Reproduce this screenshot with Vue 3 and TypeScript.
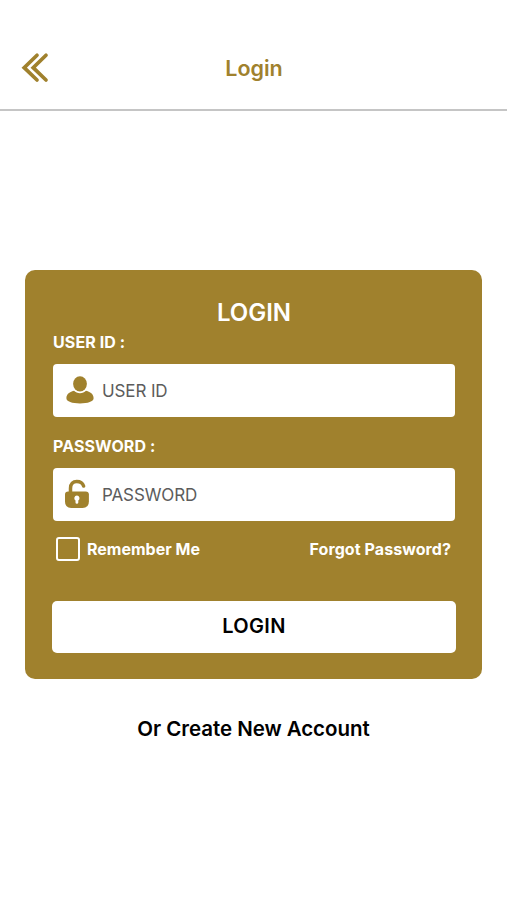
<script setup lang="ts">
import { ref } from 'vue'

const userId = ref('')
const password = ref('')
const remember = ref(false)
</script>

<template>
  <div class="screen">
    <header class="topbar">
      <button class="back" type="button" aria-label="Back">
        <svg width="30" height="32" viewBox="0 0 30 32" fill="none" stroke="currentColor" stroke-width="3.7" stroke-linecap="round" stroke-linejoin="miter">
          <path d="M17 3.2L4.2 15.7L17 28" />
          <path d="M26 3.2L13.2 15.7L26 28" />
        </svg>
      </button>
      <h1 class="title">Login</h1>
    </header>

    <main class="content">
      <form class="card" @submit.prevent>
        <h2 class="heading">LOGIN</h2>

        <label class="label user-label" for="user">USER ID :</label>
        <div class="field">
          <svg class="user-icon" width="28" height="28" viewBox="0 0 28 28" fill="currentColor">
            <ellipse cx="14" cy="7.8" rx="6.9" ry="7.6" />
            <path d="M8 14.8C3 15.9 0.4 18.7 0.4 22.2C0.4 25.4 6.2 27.4 14 27.4S27.6 25.4 27.6 22.2C27.6 18.7 25 15.9 20 14.8C18.4 16.4 16.5 17.3 14 17.3S9.6 16.4 8 14.8Z" />
          </svg>
          <input id="user" v-model="userId" class="input" type="text" placeholder="USER ID" />
        </div>

        <label class="label password-label" for="password">PASSWORD :</label>
        <div class="field">
          <svg class="lock-icon" width="26" height="30" viewBox="0 0 26 30">
            <path d="M6.5 14V9.2C6.5 5 9 2.6 12.8 2.6C16.3 2.6 18.7 4.4 19.6 7" fill="none" stroke="currentColor" stroke-width="3.5" stroke-linecap="round" />
            <path d="M4.2 12.4H21.6Q24.9 12.4 24.9 15.4V22.5Q24.9 29 18.5 29H7.2Q1 29 1 22.5V15.4Q1 12.4 4.2 12.4Z" fill="currentColor" />
            <path d="M12.9 16.6A2.6 2.6 0 0 1 14.3 21.4V23.4A1.4 1.4 0 0 1 11.5 23.4V21.4A2.6 2.6 0 0 1 12.9 16.6Z" fill="#fff" />
          </svg>
          <input id="password" v-model="password" class="input" type="password" placeholder="PASSWORD" />
        </div>

        <div class="options">
          <label class="remember">
            <input v-model="remember" class="checkbox" type="checkbox" />
            <span>Remember Me</span>
          </label>
          <a class="forgot">Forgot Password?</a>
        </div>

        <button class="submit" type="submit">LOGIN</button>
      </form>

      <a class="create">Or Create New Account</a>
    </main>
  </div>
</template>

<style>
body {
  margin: 0;
  background: #fff;
}
</style>

<style scoped>
.screen {
  --gold: #a0812d;
  box-sizing: border-box;
  width: 100%;
  min-height: 900px;
  background: #fff;
  font-family: Inter, "Liberation Sans", sans-serif;
  font-feature-settings: "calt" 0;
}
.topbar {
  box-sizing: border-box;
  height: 111px;
  padding: 26px 20px 0;
  border-bottom: 2px solid #c5c5c5;
  display: grid;
  grid-template-columns: 30px 1fr 30px;
  align-items: center;
  color: var(--gold);
}
.back {
  display: flex;
  padding: 0;
  border: 0;
  background: none;
  color: inherit;
}
.title {
  margin: 0;
  padding-left: 1px;
  font-size: 21.5px;
  line-height: 28px;
  font-weight: 620;
  text-align: center;
}
.content {
  display: flex;
  flex-direction: column;
  align-items: center;
  padding: 159px 25px 0;
}
.card {
  box-sizing: border-box;
  display: flex;
  flex-direction: column;
  width: 457px;
  height: 409px;
  padding: 28px 27px 26px 28px;
  border-radius: 10px;
  background: var(--gold);
  color: #fff;
}
.card > * {
  flex-shrink: 0;
}
.heading {
  margin: 0;
  font-size: 24px;
  line-height: 29px;
  font-weight: 600;
  text-align: center;
}
.label {
  font-size: 16px;
  line-height: 20px;
  font-weight: 700;
  letter-spacing: 0.1px;
}
.user-label {
  margin: 5px 0 12px;
}
.password-label {
  margin: 19px 0 12px;
}
.field {
  box-sizing: border-box;
  display: flex;
  align-items: center;
  height: 53px;
  padding-left: 12px;
  border-radius: 4px;
  background: #fff;
  color: var(--gold);
}
.user-icon {
  margin: 0 8px 1px 1px;
}
.lock-icon {
  margin: 0 12px 1px -1px;
}
.input {
  flex: 1;
  min-width: 0;
  padding: 1px 0 0;
  border: 0;
  outline: 0;
  background: none;
  color: #333;
  font-family: inherit;
  font-size: 17px;
  letter-spacing: -0.12px;
}
.input::placeholder {
  color: #5c5c5c;
  opacity: 1;
}
.options {
  display: flex;
  justify-content: space-between;
  align-items: center;
  height: 24px;
  margin-top: 16px;
  padding: 0 4px 0 3px;
  font-size: 16px;
  font-weight: 700;
}
.forgot {
  letter-spacing: 0.08px;
}
.remember {
  display: flex;
  align-items: center;
  gap: 7px;
}
.checkbox {
  appearance: none;
  box-sizing: border-box;
  width: 24px;
  height: 24px;
  margin: 0;
  border: 2px solid #fff;
  border-radius: 3px;
}
.checkbox:checked {
  background: #fff;
  box-shadow: inset 0 0 0 3px var(--gold);
}
.submit {
  height: 52px;
  margin: 40px -1px 0;
  padding: 0 0 2px;
  border: 0;
  border-radius: 5px;
  background: #fff;
  color: #000;
  font-family: inherit;
  font-size: 20px;
  font-weight: 600;
  letter-spacing: 0.3px;
}
.create {
  margin-top: 37px;
  color: #000;
  font-size: 20.5px;
  line-height: 26px;
  font-weight: 620;
  letter-spacing: -0.05px;
}
</style>
